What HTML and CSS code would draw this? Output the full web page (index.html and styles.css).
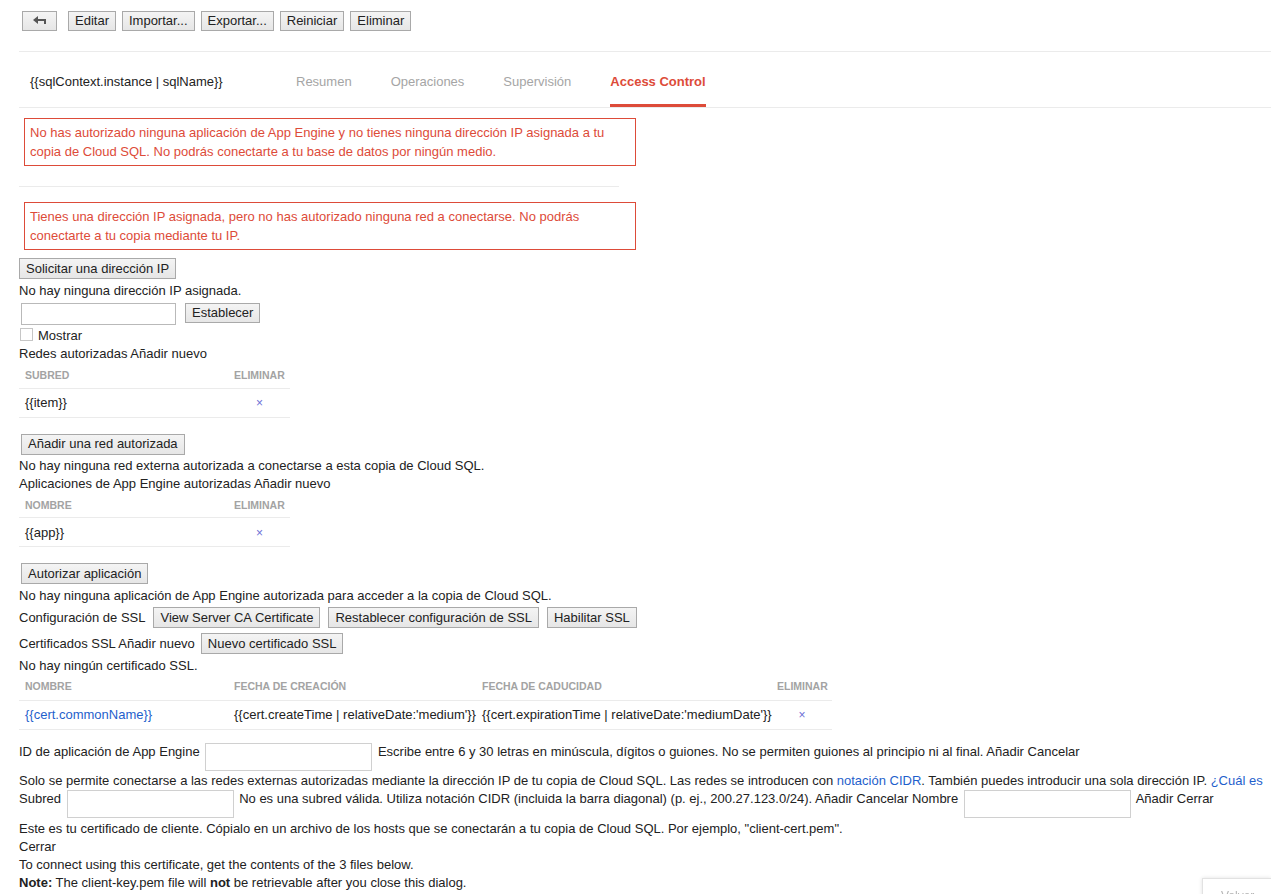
FILE: index.html
```html
<!DOCTYPE html>
<html lang="es">
<head>
  <meta charset="UTF-8">
  <title>Access Control - Cloud SQL</title>
  <link rel="stylesheet" href="styles.css">
</head>
<body>
<div class="page">
  <!-- Barra de acciones -->
  <div class="toolbar">
    <button class="btn btn-back" aria-label="Volver">
      <svg width="14" height="10" viewBox="0 0 14 10"><path d="M0 4 L5 0 L5 3 L13 3 L13 8 L11 8 L11 5 L5 5 L5 8 Z" fill="#555"/></svg>
    </button>
    <button class="btn">Editar</button>
    <button class="btn">Importar...</button>
    <button class="btn">Exportar...</button>
    <button class="btn">Reiniciar</button>
    <button class="btn">Eliminar</button>
  </div>

  <!-- Cabecera con pestañas -->
  <div class="header">
    <div class="instance-name">{{sqlContext.instance | sqlName}}</div>
    <div class="tabs">
      <a class="tab">Resumen</a>
      <a class="tab">Operaciones</a>
      <a class="tab">Supervisión</a>
      <a class="tab active">Access Control</a>
    </div>
  </div>

  <div class="alert">No has autorizado ninguna aplicación de App Engine y no tienes ninguna dirección IP asignada a tu copia de Cloud SQL. No podrás conectarte a tu base de datos por ningún medio.</div>
  <hr class="sep">
  <div class="alert alert-second">Tienes una dirección IP asignada, pero no has autorizado ninguna red a conectarse. No podrás conectarte a tu copia mediante tu IP.</div>

  <!-- Dirección IP -->
  <button class="btn btn-block">Solicitar una dirección IP</button>
  <div class="line line-loose">No hay ninguna dirección IP asignada.</div>
  <div class="ip-row">
    <input class="ip-input" type="text">
    <button class="btn">Establecer</button>
  </div>
  <label class="check-row"><input type="checkbox" class="check"> Mostrar</label>

  <!-- Redes autorizadas -->
  <div class="line line-flush">Redes autorizadas Añadir nuevo</div>
  <table class="grid grid-small">
    <thead><tr><th class="c-main">Subred</th><th class="c-del">Eliminar</th></tr></thead>
    <tbody><tr><td>{{item}}</td><td class="c-del"><span class="del">×</span></td></tr></tbody>
  </table>
  <button class="btn btn-block btn-after-table">Añadir una red autorizada</button>
  <div class="line">No hay ninguna red externa autorizada a conectarse a esta copia de Cloud SQL.</div>

  <!-- Aplicaciones App Engine -->
  <div class="line">Aplicaciones de App Engine autorizadas Añadir nuevo</div>
  <table class="grid grid-small">
    <thead><tr><th class="c-main">Nombre</th><th class="c-del">Eliminar</th></tr></thead>
    <tbody><tr><td>{{app}}</td><td class="c-del"><span class="del">×</span></td></tr></tbody>
  </table>
  <button class="btn btn-block btn-after-table">Autorizar aplicación</button>
  <div class="line line-loose">No hay ninguna aplicación de App Engine autorizada para acceder a la copia de Cloud SQL.</div>

  <!-- SSL -->
  <div class="btn-row">
    <span>Configuración de SSL</span>
    <button class="btn">View Server CA Certificate</button>
    <button class="btn">Restablecer configuración de SSL</button>
    <button class="btn">Habilitar SSL</button>
  </div>
  <div class="btn-row btn-row-tight">
    <span>Certificados SSL Añadir nuevo</span>
    <button class="btn">Nuevo certificado SSL</button>
  </div>
  <div class="line line-after-row">No hay ningún certificado SSL.</div>
  <table class="grid grid-wide">
    <thead>
      <tr>
        <th class="c-name">Nombre</th>
        <th class="c-created">Fecha de creación</th>
        <th class="c-expires">Fecha de caducidad</th>
        <th class="c-del">Eliminar</th>
      </tr>
    </thead>
    <tbody>
      <tr>
        <td><a class="link">{{cert.commonName}}</a></td>
        <td>{{cert.createTime | relativeDate:'medium'}}</td>
        <td>{{cert.expirationTime | relativeDate:'mediumDate'}}</td>
        <td class="c-del"><span class="del">×</span></td>
      </tr>
    </tbody>
  </table>

  <!-- Formularios ocultos -->
  <div class="form-line form-first">ID de aplicación de App Engine <input class="field" type="text"> Escribe entre 6 y 30 letras en minúscula, dígitos o guiones. No se permiten guiones al principio ni al final. Añadir Cancelar</div>
  <div class="line line-after-form nowrap">Solo se permite conectarse a las redes externas autorizadas mediante la dirección IP de tu copia de Cloud SQL. Las redes se introducen con <a class="link">notación CIDR</a>. También puedes introducir una sola dirección IP. <a class="link">¿Cuál es</a></div>
  <div class="form-line nowrap">Subred <input class="field" type="text"> No es una subred válida. Utiliza notación CIDR (incluida la barra diagonal) (p. ej., 200.27.123.0/24). Añadir Cancelar Nombre <input class="field" type="text"> Añadir Cerrar</div>
  <div class="line">Este es tu certificado de cliente. Cópialo en un archivo de los hosts que se conectarán a tu copia de Cloud SQL. Por ejemplo, "client-cert.pem".</div>
  <div class="line">Cerrar</div>
  <div class="line">To connect using this certificate, get the contents of the 3 files below.</div>
  <div class="line"><b>Note:</b> The client-key.pem file will <b>not</b> be retrievable after you close this dialog.</div>
</div>

<div class="feedback">Volver</div>
</body>
</html>
```

FILE: styles.css
```css
html, body {
  overflow: hidden;
}
body {
  margin: 0;
  font-family: "Liberation Sans", Arial, sans-serif;
  font-size: 13px;
  color: #222;
  background: #fff;
}
.page {
  padding: 11px 0 0 19px;
}
.btn {
  font-family: inherit;
  font-size: 13px;
  color: #222;
  height: 20px;
  padding: 0 6px;
  border: 1px solid #a9a9a9;
  border-radius: 0;
  background: linear-gradient(#f4f4f4, #e6e6e6);
  box-sizing: border-box;
  line-height: 18px;
  cursor: pointer;
}
.toolbar {
  display: flex;
  gap: 6px;
  padding-left: 3px;
  padding-bottom: 20px;
  border-bottom: 1px solid #ebebeb;
}
.btn-back {
  width: 35px;
  margin-right: 5px;
  display: flex;
  align-items: center;
  justify-content: center;
}
.header {
  display: flex;
  height: 56px;
  border-bottom: 1px solid #ebebeb;
  box-sizing: border-box;
}
.instance-name {
  width: 266px;
  padding-left: 11px;
  padding-top: 21px;
  line-height: 18px;
}
.tabs {
  display: flex;
  gap: 39px;
}
.tab {
  display: block;
  height: 55px;
  padding-top: 21px;
  line-height: 18px;
  color: #a5a5a5;
  border-bottom: 3px solid transparent;
  box-sizing: border-box;
  cursor: pointer;
}
.tab.active {
  color: #dd4b39;
  font-weight: bold;
  border-bottom-color: #dd4b39;
}
.alert {
  width: 600px;
  margin: 10px 0 0 5px;
  padding: 4px 5px 4px;
  border: 1px solid #dd4b39;
  color: #dd4b39;
  line-height: 19px;
}
.alert-second {
  margin-top: 15px;
  margin-bottom: 8px;
}
.sep {
  width: 600px;
  margin: 20px 0 0;
  border: 0;
  border-top: 1px solid #ebebeb;
}
.btn-block {
  display: block;
  height: 21px;
}
.btn-after-table {
  margin: 16px 0 0 2px;
}
.line {
  line-height: 18px;
  margin-top: 2px;
}
.line + .line,
.line-flush {
  margin-top: 0;
}
.line-loose {
  margin-top: 3px;
}
.line-after-row {
  margin-top: 3px;
}
.line-after-form {
  margin-top: 1px;
}
.ip-row {
  display: flex;
  align-items: flex-start;
  gap: 9px;
  margin: 3px 0 0 2px;
}
.ip-input {
  width: 155px;
  height: 22px;
  box-sizing: border-box;
  border: 1px solid #b9b9b9;
  margin: 0;
}
.check-row {
  display: flex;
  align-items: center;
  gap: 5px;
  height: 18px;
  margin-top: 2px;
  line-height: 18px;
}
.check {
  appearance: none;
  width: 13px;
  height: 13px;
  margin: 0 0 0 1px;
  border: 1px solid #c6c6c6;
  background: #fff;
  box-sizing: border-box;
  position: relative;
  top: -2px;
}
.grid {
  border-collapse: collapse;
}
.grid th {
  height: 25px;
  padding: 6px 5px 0 6px;
  font-size: 10.5px;
  font-weight: bold;
  text-transform: uppercase;
  color: #a3a3a3;
  text-align: left;
  vertical-align: top;
  box-sizing: border-box;
  border-bottom: 1px solid #ebebeb;
  white-space: nowrap;
}
.grid td {
  height: 29px;
  padding: 0 5px 0 6px;
  border-bottom: 1px solid #ebebeb;
  box-sizing: border-box;
  white-space: nowrap;
}
.grid-small {
  width: 271px;
}
.grid-small .c-main {
  width: 209px;
}
.grid-wide {
  width: 813px;
  table-layout: fixed;
}
.grid-wide th {
  padding-top: 5px;
}
.grid-wide .c-name { width: 209px; }
.grid-wide .c-created { width: 248px; }
.grid-wide .c-expires { width: 295px; }
.grid-wide td {
  overflow: visible;
}
.grid th.c-del {
  padding-left: 6px;
  padding-right: 0;
}
td.c-del {
  text-align: center;
}
.del {
  color: #6d6fd6;
  font-size: 12px;
  cursor: pointer;
}
.link {
  color: #1f5fcc;
  text-decoration: none;
  cursor: pointer;
}
.btn-row {
  display: flex;
  align-items: center;
  gap: 8px;
  height: 23px;
  margin-top: 1px;
}
.btn-row .btn {
  height: 21px;
}
.btn-row-tight {
  margin-top: 4px;
  gap: 6px;
  height: 21px;
}
.nowrap {
  white-space: nowrap;
}
.form-line {
  line-height: 18px;
}
.form-first {
  margin-top: 13px;
}
.field {
  width: 167px;
  height: 28px;
  box-sizing: border-box;
  border: 1px solid #d0d0d0;
  margin: 0 2px;
  vertical-align: top;
}
.feedback {
  position: fixed;
  left: 1202px;
  top: 878px;
  width: 69px;
  height: 40px;
  padding: 10px 0 0 18px;
  box-sizing: border-box;
  background: #fff;
  border: 1px solid #e2e2e2;
  border-right: 0;
  box-shadow: 0 0 4px rgba(0, 0, 0, 0.12);
  color: #b5b5b5;
  font-size: 12px;
  white-space: nowrap;
  overflow: hidden;
}
```
